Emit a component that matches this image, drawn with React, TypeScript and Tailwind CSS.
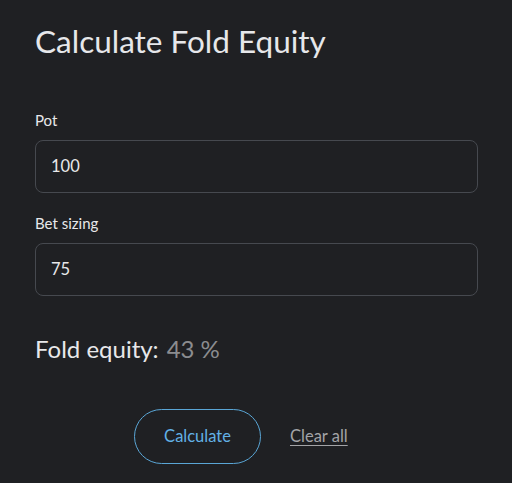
import React from "react";

export default function App() {
  return (
    <div className="w-[512px] h-[483px] bg-[#1f2023] text-[#e8e8ea] px-[35px] pt-[22px]" style={{ fontFamily: "Lato, 'Noto Sans', sans-serif" }}>
      <h1 className="text-[31.5px] leading-[38px] text-[#e6e7ea]">Calculate Fold Equity</h1>
      <div className="mt-[50px]">
        <label className="block text-[15px] leading-[20px] text-[#e8e8ea]">Pot</label>
        <div className="mt-[10px] w-[443px] h-[53px] rounded-[8px] border border-[#46494f] flex items-center px-[15px] text-[16.5px] text-[#e8e8ea]">100</div>
      </div>
      <div className="mt-[20px]">
        <label className="block text-[15px] leading-[20px] text-[#e8e8ea]">Bet sizing</label>
        <div className="mt-[10px] w-[443px] h-[53px] rounded-[8px] border border-[#46494f] flex items-center px-[15px] text-[16.5px] text-[#e8e8ea]">75</div>
      </div>
      <div className="mt-[38px] flex items-baseline gap-[8px] text-[24px] leading-[30px]">
        <span className="text-[#e8e8ea]">Fold equity:</span>
        <span className="text-[#8b8c8f]">43 %</span>
      </div>
      <div className="mt-[45px] flex items-center">
        <div className="ml-[99px] w-[127px] h-[55px] rounded-full border border-[#5aa6d6] flex items-center justify-center text-[16.5px] text-[#62b1e6]">Calculate</div>
        <div className="ml-[29px] text-[16.5px] text-[#a3a4a7] underline underline-offset-[3px]">Clear all</div>
      </div>
    </div>
  );
}
